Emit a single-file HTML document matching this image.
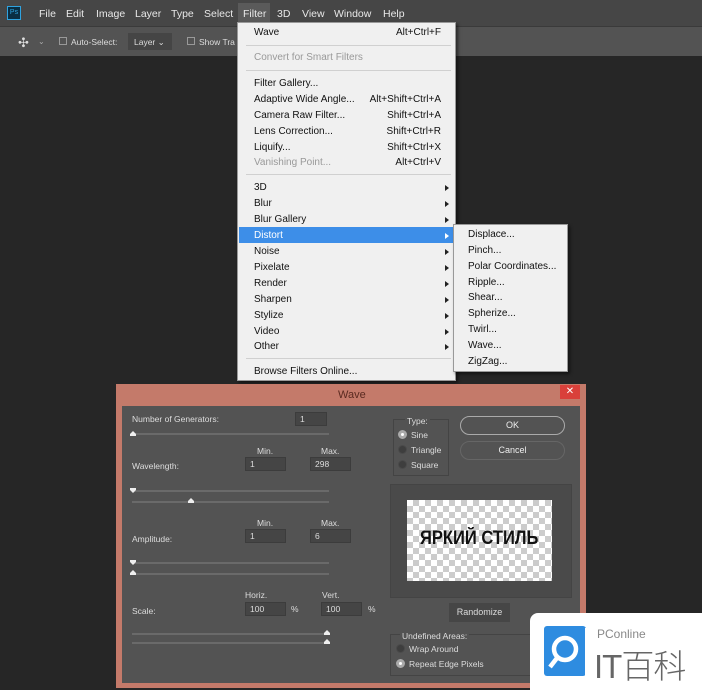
<!DOCTYPE html><html><head><style>
*{margin:0;padding:0;box-sizing:border-box}
body{width:702px;height:690px;background:#262626;position:relative;overflow:hidden;font-family:"Liberation Sans",sans-serif;font-size:10px}
.a{position:absolute;white-space:nowrap}
.mb{left:0;top:0;width:702px;height:26px;background:#464646}
.tb{left:0;top:26px;width:702px;height:30px;background:#535353;border-top:1px solid #3a3a3a}
.mt{color:#e8e8e8;font-size:10.5px;top:8px}
.menu{left:237px;top:22px;width:219px;height:359px;background:#f0f0f0;border:1px solid #999;box-shadow:2px 2px 3px rgba(0,0,0,.5)}
.mi{color:#111;font-size:10px;left:16px}
.dis{color:#999}
.sc{right:14px;color:#111;font-size:10px}
.sep{left:8px;right:4px;height:1px;background:#d0d0d0}
.arr{right:6px;width:0;height:0;border-left:4px solid #222;border-top:3px solid transparent;border-bottom:3px solid transparent}
.sub{left:453px;top:224px;width:115px;height:148px;background:#f0f0f0;border:1px solid #999;box-shadow:2px 2px 3px rgba(0,0,0,.5)}
.dl{left:116px;top:384px;width:470px;height:304px;background:#c47a6a}
.di{left:122px;top:406px;width:458px;height:277px;background:#535353}
.lt{color:#ddd;font-size:8.5px}
.in{background:#454545;border:1px solid #3c3c3c;height:14px;color:#ddd;font-size:8.5px;padding-left:4px;line-height:12px}
.tr{height:2px;background:#6a6a6a}
.th{width:6px;height:5px;background:#eee;clip-path:polygon(50% 0,100% 60%,100% 100%,0 100%,0 60%)}
.thd{width:6px;height:5px;background:#eee;clip-path:polygon(0 0,100% 0,100% 40%,50% 100%,0 40%)}
.rb{width:9px;height:9px;border-radius:50%;background:#3e3e3e;border:1px solid #4a4a4a}
.rs{background:#fff;border:3px solid #aaa}
.btn{border:1px solid #aaa;border-radius:10px;color:#eee;font-size:9px;text-align:center;line-height:17px}
</style></head><body>
<div class="a mb"></div>
<div class="a" style="left:7px;top:6px;width:14px;height:14px;background:#0a2f44;border:1px solid #2fa3e0;color:#2fa3e0;font-size:7px;line-height:12px;text-align:center">Ps</div>
<div class="a mt" style="left:39px">File</div><div class="a mt" style="left:66px">Edit</div><div class="a mt" style="left:96px">Image</div><div class="a mt" style="left:135px">Layer</div><div class="a mt" style="left:171px">Type</div><div class="a mt" style="left:204px">Select</div>
<div class="a" style="left:238px;top:3px;width:32px;height:20px;background:#5a5a5a"></div>
<div class="a mt" style="left:243px">Filter</div><div class="a mt" style="left:277px">3D</div><div class="a mt" style="left:302px">View</div><div class="a mt" style="left:334px">Window</div><div class="a mt" style="left:383px">Help</div>
<div class="a tb"></div>
<div class="a" style="left:18px;top:35px;color:#ddd;font-size:13px">✣</div>
<div class="a" style="left:38px;top:37px;color:#aaa;font-size:8px">⌄</div>
<div class="a" style="left:59px;top:37px;width:8px;height:8px;border:1px solid #999"></div>
<div class="a" style="left:71px;top:37px;color:#ddd;font-size:8.5px">Auto-Select:</div>
<div class="a" style="left:128px;top:33px;width:44px;height:17px;background:#454545;color:#ddd;font-size:8.5px;padding:4px 6px">Layer ⌄</div>
<div class="a" style="left:187px;top:37px;width:8px;height:8px;border:1px solid #999"></div>
<div class="a" style="left:199px;top:37px;color:#ddd;font-size:8.5px">Show Tra</div>

<div class="a menu">
<div class="a mi" style="top:4px">Wave</div><div class="a sc" style="top:4px">Alt+Ctrl+F</div>
<div class="a sep" style="top:22px"></div>
<div class="a mi dis" style="top:29px">Convert for Smart Filters</div>
<div class="a sep" style="top:47px"></div>
<div class="a mi" style="top:55px">Filter Gallery...</div>
<div class="a mi" style="top:71px">Adaptive Wide Angle...</div><div class="a sc" style="top:71px">Alt+Shift+Ctrl+A</div>
<div class="a mi" style="top:87px">Camera Raw Filter...</div><div class="a sc" style="top:87px">Shift+Ctrl+A</div>
<div class="a mi" style="top:103px">Lens Correction...</div><div class="a sc" style="top:103px">Shift+Ctrl+R</div>
<div class="a mi" style="top:119px">Liquify...</div><div class="a sc" style="top:119px">Shift+Ctrl+X</div>
<div class="a mi dis" style="top:134px">Vanishing Point...</div><div class="a sc dis" style="top:134px">Alt+Ctrl+V</div>
<div class="a sep" style="top:151px"></div>
<div class="a" style="left:1px;top:204px;width:215px;height:16px;background:#3d8ee8"></div>
<div class="a mi" style="top:159px">3D</div><div class="a arr" style="top:162px"></div>
<div class="a mi" style="top:175px">Blur</div><div class="a arr" style="top:178px"></div>
<div class="a mi" style="top:191px">Blur Gallery</div><div class="a arr" style="top:194px"></div>
<div class="a mi" style="top:207px;color:#fff">Distort</div><div class="a arr" style="top:210px;border-left-color:#fff"></div>
<div class="a mi" style="top:223px">Noise</div><div class="a arr" style="top:226px"></div>
<div class="a mi" style="top:239px">Pixelate</div><div class="a arr" style="top:242px"></div>
<div class="a mi" style="top:255px">Render</div><div class="a arr" style="top:258px"></div>
<div class="a mi" style="top:271px">Sharpen</div><div class="a arr" style="top:274px"></div>
<div class="a mi" style="top:287px">Stylize</div><div class="a arr" style="top:290px"></div>
<div class="a mi" style="top:303px">Video</div><div class="a arr" style="top:306px"></div>
<div class="a mi" style="top:318px">Other</div><div class="a arr" style="top:321px"></div>
<div class="a sep" style="top:335px"></div>
<div class="a mi" style="top:343px">Browse Filters Online...</div>
</div>
<div class="a sub">
<div class="a mi" style="left:14px;top:4px">Displace...</div>
<div class="a mi" style="left:14px;top:20px">Pinch...</div>
<div class="a mi" style="left:14px;top:36px">Polar Coordinates...</div>
<div class="a mi" style="left:14px;top:52px">Ripple...</div>
<div class="a mi" style="left:14px;top:67px">Shear...</div>
<div class="a mi" style="left:14px;top:83px">Spherize...</div>
<div class="a mi" style="left:14px;top:99px">Twirl...</div>
<div class="a mi" style="left:14px;top:115px">Wave...</div>
<div class="a mi" style="left:14px;top:131px">ZigZag...</div>
</div>

<div class="a dl"></div>
<div class="a" style="left:338px;top:389px;color:#5a2a20;font-size:11px">Wave</div>
<div class="a" style="left:560px;top:385px;width:20px;height:14px;background:#d9403a;color:#fff;font-size:10px;text-align:center;line-height:14px">✕</div>
<div class="a di"></div>
<div class="a lt" style="left:132px;top:414px">Number of Generators:</div>
<div class="a in" style="left:295px;top:412px;width:32px">1</div>
<div class="a tr" style="left:132px;top:433px;width:197px"></div><div class="a th" style="left:130px;top:431px"></div>
<div class="a lt" style="left:257px;top:446px">Min.</div><div class="a lt" style="left:321px;top:446px">Max.</div>
<div class="a lt" style="left:132px;top:461px">Wavelength:</div>
<div class="a in" style="left:245px;top:457px;width:41px">1</div><div class="a in" style="left:310px;top:457px;width:41px">298</div>
<div class="a tr" style="left:132px;top:490px;width:197px"></div><div class="a thd" style="left:130px;top:488px"></div>
<div class="a tr" style="left:132px;top:501px;width:197px"></div><div class="a th" style="left:188px;top:498px"></div>
<div class="a lt" style="left:257px;top:518px">Min.</div><div class="a lt" style="left:321px;top:518px">Max.</div>
<div class="a lt" style="left:132px;top:534px">Amplitude:</div>
<div class="a in" style="left:245px;top:529px;width:41px">1</div><div class="a in" style="left:310px;top:529px;width:41px">6</div>
<div class="a tr" style="left:132px;top:562px;width:197px"></div><div class="a thd" style="left:130px;top:560px"></div>
<div class="a tr" style="left:132px;top:573px;width:197px"></div><div class="a th" style="left:130px;top:570px"></div>
<div class="a lt" style="left:245px;top:590px">Horiz.</div><div class="a lt" style="left:322px;top:590px">Vert.</div>
<div class="a lt" style="left:132px;top:606px">Scale:</div>
<div class="a in" style="left:245px;top:602px;width:41px">100</div><div class="a lt" style="left:291px;top:604px">%</div>
<div class="a in" style="left:321px;top:602px;width:41px">100</div><div class="a lt" style="left:368px;top:604px">%</div>
<div class="a tr" style="left:132px;top:633px;width:197px"></div><div class="a th" style="left:324px;top:630px"></div>
<div class="a tr" style="left:132px;top:642px;width:197px"></div><div class="a th" style="left:324px;top:639px"></div>

<div class="a" style="left:393px;top:419px;width:56px;height:57px;border:1px solid #444"></div>
<div class="a lt" style="left:405px;top:416px;background:#535353;padding:0 2px">Type:</div>
<div class="a rb rs" style="left:398px;top:430px"></div><div class="a lt" style="left:411px;top:430px">Sine</div>
<div class="a rb" style="left:398px;top:445px"></div><div class="a lt" style="left:411px;top:445px">Triangle</div>
<div class="a rb" style="left:398px;top:460px"></div><div class="a lt" style="left:411px;top:460px">Square</div>
<div class="a btn" style="left:460px;top:416px;width:105px;height:19px">OK</div>
<div class="a btn" style="left:460px;top:441px;width:105px;height:19px;border-color:#666">Cancel</div>
<div class="a" style="left:390px;top:484px;width:182px;height:114px;background:#4a4a4a;border:1px solid #444"></div>
<div class="a" style="left:407px;top:500px;width:145px;height:81px;background-color:#fff;background-image:linear-gradient(45deg,#ccc 25%,transparent 25%,transparent 75%,#ccc 75%),linear-gradient(45deg,#ccc 25%,transparent 25%,transparent 75%,#ccc 75%);background-size:12px 12px;background-position:0 0,6px 6px"></div>
<div class="a" style="left:420px;top:528px;color:#111;font-size:19px;font-weight:bold;transform:scaleX(.87);transform-origin:left">ЯРКИЙ СТИЛЬ</div>
<div class="a" style="left:449px;top:603px;width:61px;height:19px;background:#464646;color:#ddd;font-size:9px;text-align:center;line-height:19px">Randomize</div>
<div class="a" style="left:390px;top:634px;width:182px;height:42px;border:1px solid #444"></div>
<div class="a lt" style="left:400px;top:631px;background:#535353;padding:0 2px">Undefined Areas:</div>
<div class="a rb" style="left:396px;top:644px"></div><div class="a lt" style="left:409px;top:644px">Wrap Around</div>
<div class="a rb rs" style="left:396px;top:659px"></div><div class="a lt" style="left:409px;top:659px">Repeat Edge Pixels</div>

<div class="a" style="left:530px;top:613px;width:172px;height:77px;background:#fff;border-radius:8px 0 0 0"></div>
<div class="a" style="left:544px;top:626px;width:42px;height:50px;background:#2e8ce0;border-radius:3px"></div>
<svg class="a" style="left:544px;top:626px" width="46" height="52"><circle cx="21" cy="23" r="11" fill="none" stroke="#fff" stroke-width="4.5"/><line x1="13" y1="32" x2="6" y2="41" stroke="#fff" stroke-width="4.5"/><line x1="42" y1="2" x2="42" y2="50" stroke="#fff" stroke-width="2"/></svg>
<div class="a" style="left:597px;top:627px;color:#888;font-size:12px">PConline</div>
<div class="a" style="left:594px;top:640px;color:#666;font-size:33px;letter-spacing:-1px;font-family:'Liberation Sans','Noto Sans CJK SC',sans-serif;font-weight:300">IT百科</div>
</body></html>
